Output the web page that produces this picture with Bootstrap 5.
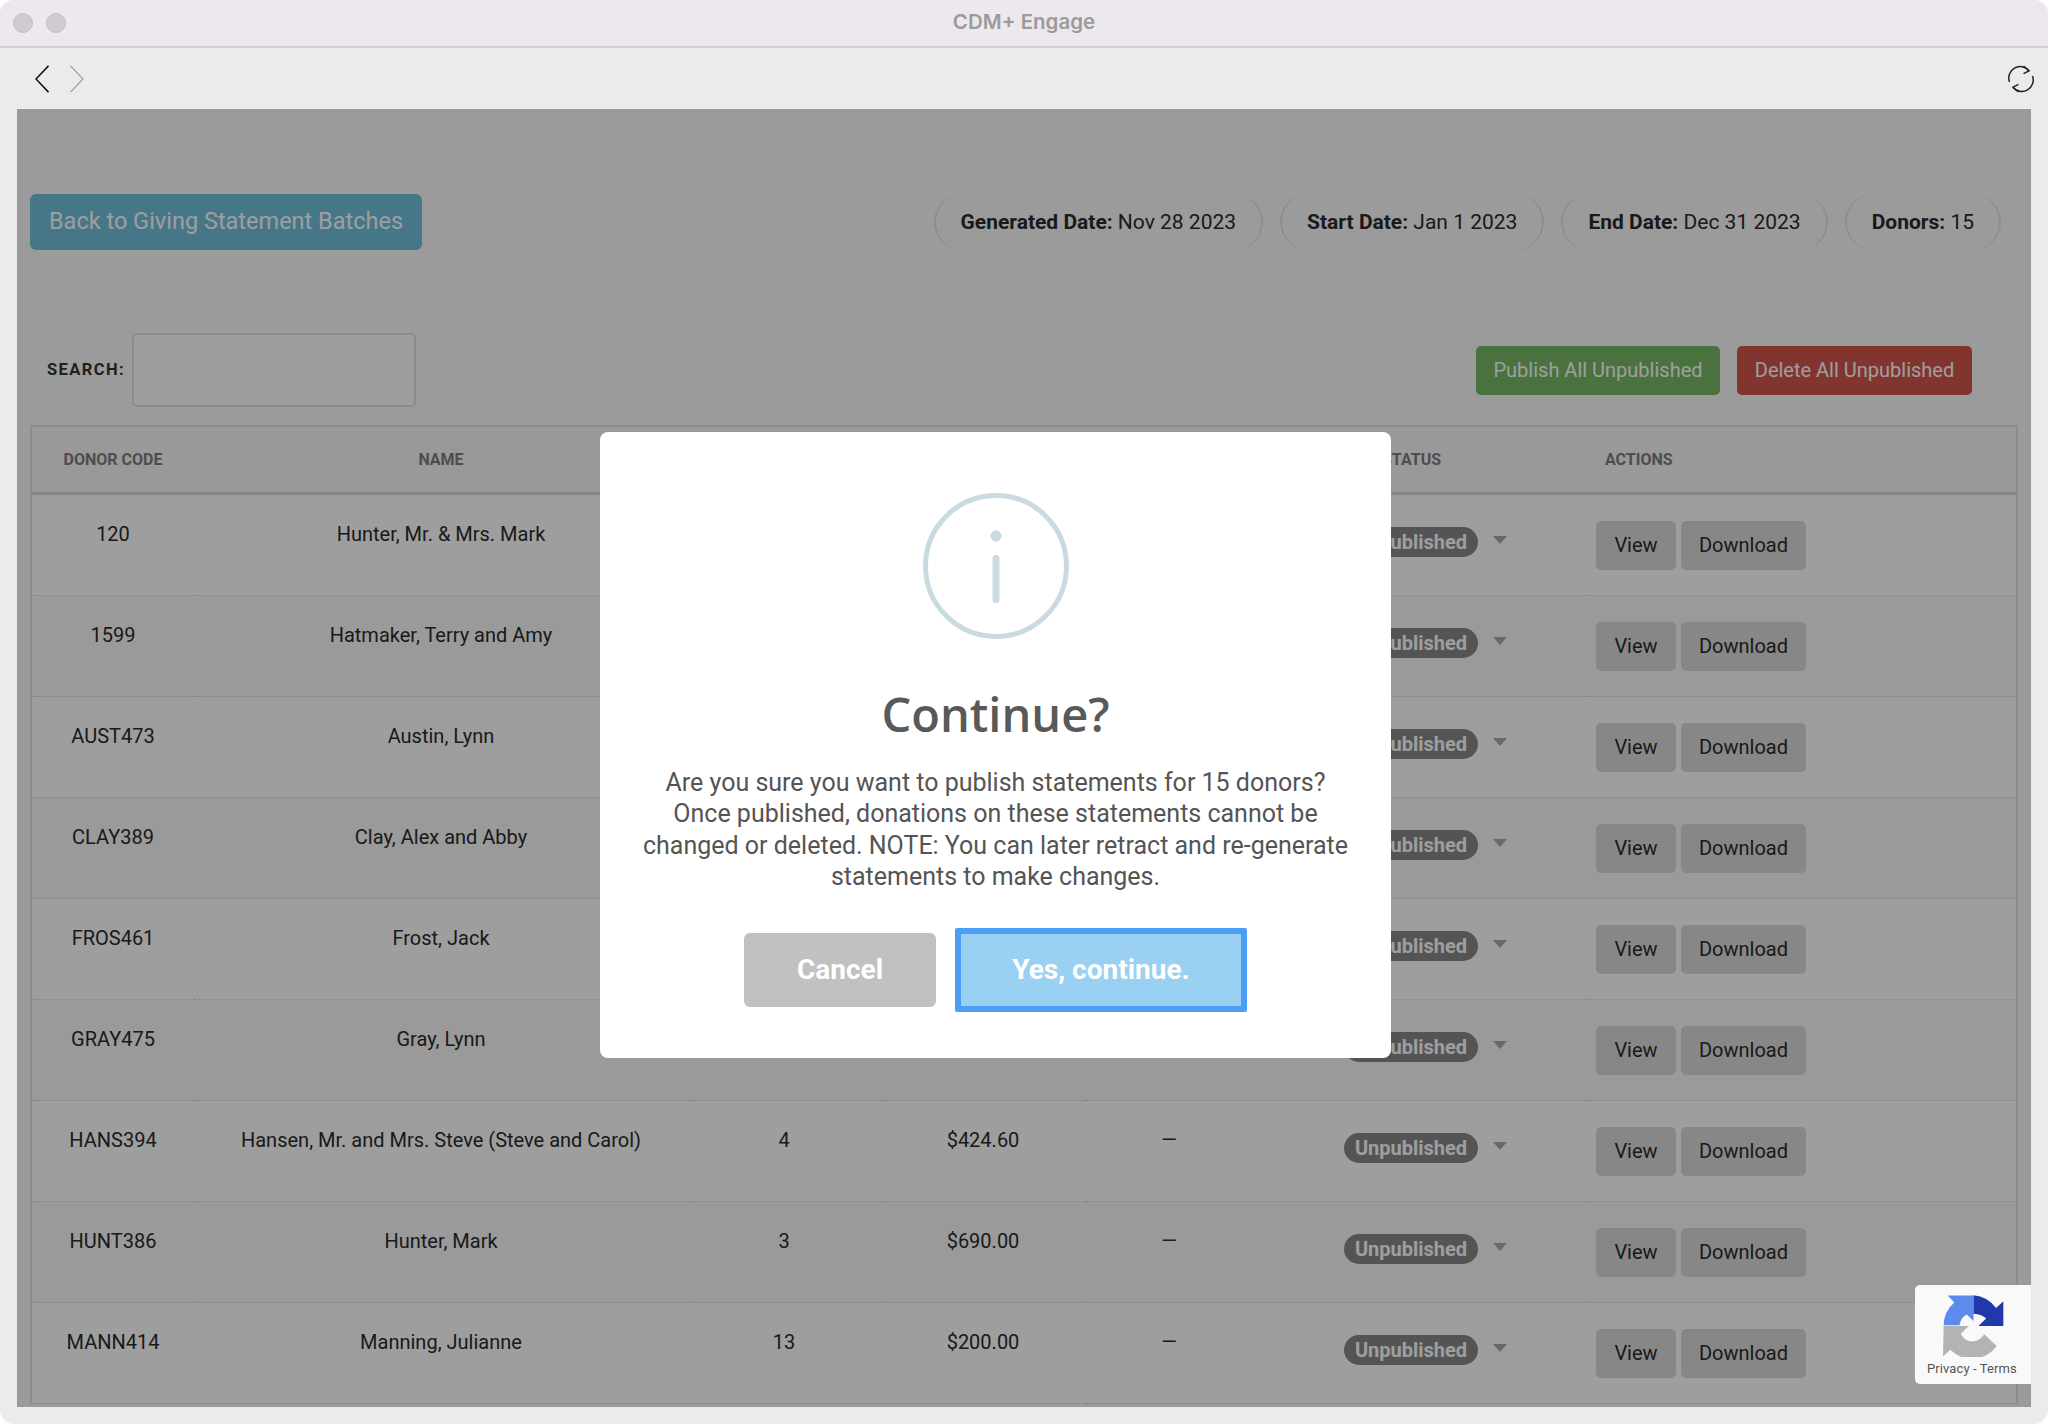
<!doctype html>
<html lang="en">
<head>
<meta charset="utf-8">
<title>CDM+ Engage</title>
<link href="https://cdn.jsdelivr.net/npm/bootstrap@5.3.0/dist/css/bootstrap.min.css" rel="stylesheet">
<style>
html,body{height:100%;overflow:hidden;background:#fff;font-family:Roboto,sans-serif}
.app-window{height:1424px;background:#ebebeb;border-radius:14px;overflow:hidden}
.title-strip{height:48px;flex:none;background:#ede8ee;border-bottom:2px solid #d2cfd2;position:relative}
.light{width:20px;height:20px;border-radius:50%;background:#cfcbd0;border:1px solid #c3bfc4}
.lights{padding:13px 0 0 13px;gap:13px}
.win-title{position:absolute;left:0;right:0;top:9px;text-align:center;font:600 20.5px/26px Inter,sans-serif;color:#9b9b9b}
.tool-strip{height:61px;flex:none;padding:0 14px 0 35px}
.nav-arrows{gap:21px}
.view-pane{position:relative;flex:1 1 auto;margin:0 17px 17px;background:#fafafa;overflow:hidden;padding:85px 13px 0;color:#333}
.top-row{height:56px}
.btn-back{height:56px;width:392px;padding:0;background:#72c0de;border:0;border-radius:6px;color:#fff;font-size:23.5px}
.btn-back:hover{background:#72c0de;color:#fff}
.info-pills{gap:17px;padding-right:17px}
.info-pill{height:56px;padding:0 25px;border-left:2px solid #e4e4e4;border-right:2px solid #e4e4e4;border-radius:28px;font-size:21px;line-height:56px;white-space:nowrap;color:#2b2b2b;text-align:center}
.search-row{height:74px;margin:83px 0 18px}
.search-cap{font-size:16.5px;font-weight:700;letter-spacing:1.4px;color:#333;margin:0 7px 0 17px}
.search-box{width:284px;height:74px;border:2px solid #e2e2e2;border-radius:5px;background:#fff}
.bulk-btns{gap:17px;padding-right:46px}
.btn-bulk{height:49px;padding:0;border-radius:5px;font-size:20px;color:#fff;border:0}
.btn-pub{width:244px;background:#77b967}
.btn-del{width:235px;background:#d2554d}
.btn-pub:hover{background:#77b967;color:#fff}
.btn-del:hover{background:#d2554d;color:#fff}
.donor-table{table-layout:fixed;width:1988px;margin:0;border-collapse:separate;border-spacing:0;border-left:2px solid #e2e2e2;border-right:2px solid #e2e2e2;border-top:2px solid #e2e2e2;--bs-table-bg:transparent;--bs-table-color:#2b2b2b}
.donor-table th{height:68px;padding:0;border-bottom:3px solid #d8d8d8;background:#f7f7f7;font-size:16px;font-weight:700;color:#7d7d7d;text-align:center;vertical-align:middle}
.donor-table td{height:101px;padding:26px 0 0;border-bottom:1px dotted #d4d4d4;font-size:20px;line-height:26px;text-align:center;vertical-align:top;white-space:nowrap}
.donor-table tbody tr:nth-child(odd) td{background:#fff}
.donor-table tbody tr:nth-child(even) td{background:#f8f8f8}
.donor-table .th-status{text-align:left;padding-left:130px}
.donor-table .th-actions{text-align:left;padding-left:20px}
.donor-table td.td-status{text-align:left;padding:32px 0 0 92px;line-height:0}
.donor-table td.td-actions{text-align:left;padding:26px 0 0 11px;line-height:0}
.status-pill{display:inline-block;width:134px;height:30px;border-radius:15px;background:#888;color:#fff;font-size:20px;font-weight:700;line-height:30px;text-align:center;padding:0}
.status-caret{display:inline-block;width:0;height:0;margin:0 0 0 15px;border-left:7px solid transparent;border-right:7px solid transparent;border-top:8px solid #aaa;vertical-align:top;position:relative;top:9px}
.btn-row{height:49px;padding:0;border:0;border-radius:5px;background:#dadada;color:#2b2b2b;font-size:20px;line-height:49px}
.btn-row:hover{background:#dadada;color:#2b2b2b}
.btn-v{width:80px;margin-right:5px}
.btn-d{width:125px}
.dim-layer{position:absolute;inset:0;background:rgba(0,0,0,.38);padding:0 57px 26px 0}
.alert-box{width:791px;height:626px;border:0;border-radius:8px;background:#fff;padding-top:61px;color:#545454}
.info-ring{width:146px;height:146px}
.alert-title{font:600 47px/64px "Open Sans",sans-serif;color:#595959;margin:43px 0 21px}
.alert-text{font-size:25px;line-height:31.3px;width:712px;color:#545454;margin-bottom:41px}
.alert-btns{gap:19px}
.btn-no{width:192px;height:74px;padding:0;border:0;border-radius:6px;background:#c1c1c1;color:#fff;font-size:28px;font-weight:700}
.btn-no:hover{background:#c1c1c1;color:#fff}
.btn-yes{width:292px;height:84px;padding:0;border:6px solid #4a9ff5;border-radius:2px;background:#9ad0f2;color:#fff;font-size:28px;font-weight:700;margin-top:-5px;margin-bottom:-5px}
.btn-yes:hover{background:#9ad0f2;color:#fff;border-color:#4a9ff5}
.captcha-badge{position:absolute;left:1898px;top:1176px;width:116px;height:99px;background:#f9f9f9;border-radius:5px 0 0 5px;padding-top:10px}
.captcha-links{font-size:13px;line-height:16px;color:#555;margin-top:4px;padding-left:12px;white-space:nowrap;letter-spacing:.1px}
</style>
</head>
<body>
<div class="app-window d-flex flex-column">
  <div class="title-strip">
    <div class="lights d-flex"><span class="light"></span><span class="light"></span></div>
    <div class="win-title">CDM+ Engage</div>
  </div>
  <div class="tool-strip d-flex align-items-center justify-content-between">
    <div class="nav-arrows d-flex">
      <svg width="14" height="28" viewBox="0 0 14 28" fill="none"><path d="M13.5 .8 1 14l12.5 13.2" stroke="#111" stroke-width="1.6"/></svg>
      <svg width="14" height="28" viewBox="0 0 14 28" fill="none"><path d="M.5 .8 13 14 .5 27.2" stroke="#9a9a9a" stroke-width="1.1"/></svg>
    </div>
    <svg width="26" height="28" viewBox="0 0 26 28" fill="none" stroke="#222" stroke-width="1.5">
      <path d="M1.5 17A11.5 11.5 0 0 1 21 5.5"/><path d="M24.5 11A11.5 11.5 0 0 1 5 22.5"/>
      <path d="M15.5 1 21 5.8l-5.5 2.8"/><path d="M10.5 27 5 22.2l5.5-2.8"/>
    </svg>
  </div>
  <div class="view-pane">
    <div class="top-row d-flex justify-content-between">
      <button type="button" class="btn btn-back">Back to Giving Statement Batches</button>
      <div class="info-pills d-flex">
        <div class="info-pill"><b>Generated Date:</b> Nov 28 2023</div>
        <div class="info-pill"><b>Start Date:</b> Jan 1 2023</div>
        <div class="info-pill"><b>End Date:</b> Dec 31 2023</div>
        <div class="info-pill"><b>Donors:</b> 15</div>
      </div>
    </div>
    <div class="search-row d-flex align-items-center justify-content-between">
      <div class="d-flex align-items-center">
        <label class="search-cap" for="donor-search">SEARCH:</label>
        <input id="donor-search" class="search-box" type="text">
      </div>
      <div class="bulk-btns d-flex">
        <button type="button" class="btn btn-bulk btn-pub">Publish All Unpublished</button>
        <button type="button" class="btn btn-bulk btn-del">Delete All Unpublished</button>
      </div>
    </div>
    <table class="table donor-table">
      <colgroup><col style="width:162px"><col style="width:494px"><col style="width:192px"><col style="width:206px"><col style="width:166px"><col style="width:333px"><col></colgroup>
      <thead><tr><th>DONOR CODE</th><th>NAME</th><th></th><th></th><th></th><th class="th-status">STATUS</th><th class="th-actions">ACTIONS</th></tr></thead>
      <tbody>
        <tr><td>120</td><td>Hunter, Mr. &amp; Mrs. Mark</td><td></td><td></td><td></td><td class="td-status"><span class="status-pill">Unpublished</span><span class="status-caret"></span></td><td class="td-actions"><button type="button" class="btn btn-row btn-v">View</button><button type="button" class="btn btn-row btn-d">Download</button></td></tr>
        <tr><td>1599</td><td>Hatmaker, Terry and Amy</td><td></td><td></td><td></td><td class="td-status"><span class="status-pill">Unpublished</span><span class="status-caret"></span></td><td class="td-actions"><button type="button" class="btn btn-row btn-v">View</button><button type="button" class="btn btn-row btn-d">Download</button></td></tr>
        <tr><td>AUST473</td><td>Austin, Lynn</td><td></td><td></td><td></td><td class="td-status"><span class="status-pill">Unpublished</span><span class="status-caret"></span></td><td class="td-actions"><button type="button" class="btn btn-row btn-v">View</button><button type="button" class="btn btn-row btn-d">Download</button></td></tr>
        <tr><td>CLAY389</td><td>Clay, Alex and Abby</td><td></td><td></td><td></td><td class="td-status"><span class="status-pill">Unpublished</span><span class="status-caret"></span></td><td class="td-actions"><button type="button" class="btn btn-row btn-v">View</button><button type="button" class="btn btn-row btn-d">Download</button></td></tr>
        <tr><td>FROS461</td><td>Frost, Jack</td><td></td><td></td><td></td><td class="td-status"><span class="status-pill">Unpublished</span><span class="status-caret"></span></td><td class="td-actions"><button type="button" class="btn btn-row btn-v">View</button><button type="button" class="btn btn-row btn-d">Download</button></td></tr>
        <tr><td>GRAY475</td><td>Gray, Lynn</td><td></td><td></td><td></td><td class="td-status"><span class="status-pill">Unpublished</span><span class="status-caret"></span></td><td class="td-actions"><button type="button" class="btn btn-row btn-v">View</button><button type="button" class="btn btn-row btn-d">Download</button></td></tr>
        <tr><td>HANS394</td><td>Hansen, Mr. and Mrs. Steve (Steve and Carol)</td><td>4</td><td>$424.60</td><td>—</td><td class="td-status"><span class="status-pill">Unpublished</span><span class="status-caret"></span></td><td class="td-actions"><button type="button" class="btn btn-row btn-v">View</button><button type="button" class="btn btn-row btn-d">Download</button></td></tr>
        <tr><td>HUNT386</td><td>Hunter, Mark</td><td>3</td><td>$690.00</td><td>—</td><td class="td-status"><span class="status-pill">Unpublished</span><span class="status-caret"></span></td><td class="td-actions"><button type="button" class="btn btn-row btn-v">View</button><button type="button" class="btn btn-row btn-d">Download</button></td></tr>
        <tr><td>MANN414</td><td>Manning, Julianne</td><td>13</td><td>$200.00</td><td>—</td><td class="td-status"><span class="status-pill">Unpublished</span><span class="status-caret"></span></td><td class="td-actions"><button type="button" class="btn btn-row btn-v">View</button><button type="button" class="btn btn-row btn-d">Download</button></td></tr>
      </tbody>
    </table>
    <div class="dim-layer d-flex align-items-center justify-content-center">
      <div class="modal-content alert-box align-items-center text-center">
        <svg class="info-ring" viewBox="0 0 146 146" fill="none">
          <circle cx="73" cy="73" r="70.5" stroke="#c9dae1" stroke-width="5"/>
          <circle cx="73" cy="43" r="5.5" fill="#c9dae1"/>
          <rect x="69.5" y="62" width="7" height="48" rx="3.5" fill="#c9dae1"/>
        </svg>
        <h2 class="alert-title">Continue?</h2>
        <div class="alert-text">Are you sure you want to publish statements for 15 donors? Once published, donations on these statements cannot be changed or deleted. NOTE: You can later retract and re-generate statements to make changes.</div>
        <div class="alert-btns d-flex align-items-center">
          <button type="button" class="btn btn-no">Cancel</button>
          <button type="button" class="btn btn-yes">Yes, continue.</button>
        </div>
      </div>
    </div>
    <div class="captcha-badge text-center">
      <svg width="61" height="62" viewBox="728 527 184 186">
        <path fill="#5a8bed" d="M730 618A92 92 0 0 1 762 549L742 528H820V605L800 585C788 590 780 602 778 618Z"/>
        <path fill="#2038a8" d="M820 527A92 92 0 0 1 888 566L910 545V620H835L858 597C850 590 838 584 820 583Z"/>
        <path fill="#b2b3b3" d="M730 620H805L782 643C795 672 835 675 852 645L890 680A92 92 0 0 1 750 692L728 712Z"/>
      </svg>
      <div class="captcha-links text-start">Privacy - Terms</div>
    </div>
  </div>
</div>
<script src="https://cdn.jsdelivr.net/npm/bootstrap@5.3.0/dist/js/bootstrap.bundle.min.js"></script>
</body>
</html>
